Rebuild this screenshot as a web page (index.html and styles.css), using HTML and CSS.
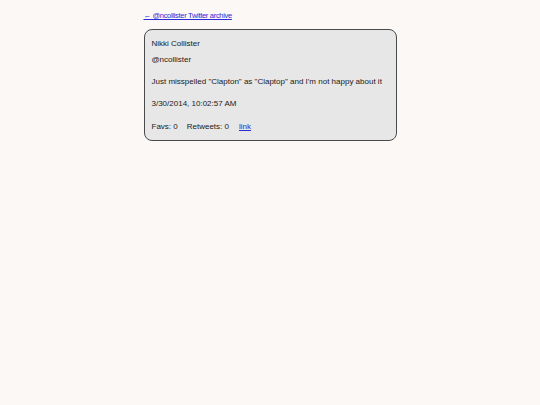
FILE: index.html
```html
<!DOCTYPE html>
<html>
<head>
<meta charset="utf-8">
<link rel="stylesheet" href="styles.css">
</head>
<body>
<div class="page">
  <a class="back" href="#">← @ncollister Twitter archive</a>
  <div class="card">
    <p class="name">Nikki Collister</p>
    <p class="handle">@ncollister</p>
    <p class="text">Just misspelled "Clapton" as "Claptop" and I'm not happy about it</p>
    <p class="date">3/30/2014, 10:02:57 AM</p>
    <p class="meta"><span>Favs: 0</span><span>Retweets: 0</span><a href="#">link</a></p>
  </div>
</div>
</body>
</html>
```
FILE: styles.css
```css
html, body {
  margin: 0;
  background: #fbf8f6;
}
.page {
  width: 253px;
  margin: 0 auto;
  padding-top: 11px;
  font-family: "Liberation Sans", Arial, sans-serif;
  color: #1a1a1a;
}
.back {
  display: block;
  font-size: 7.5px;
  letter-spacing: -0.3px;
  color: #2a2ad8;
  line-height: 10px;
}
.card {
  margin-top: 8px;
  background: #e7e7e7;
  border: 1px solid #4a4a4a;
  border-radius: 8px;
  padding: 4px 7px 2px;
  font-size: 8px;
}
.card p {
  margin: 0;
  line-height: 12px;
}
.name { margin-top: 4px !important; }
.handle { margin-top: 4px !important; }
.text { margin-top: 10px !important; }
.date { margin-top: 10px !important; }
.meta { margin-top: 11px !important; margin-bottom: 5px !important; display: flex; gap: 9px; }
.meta a { color: #2a2ad8; margin-left: 1px; }
```
